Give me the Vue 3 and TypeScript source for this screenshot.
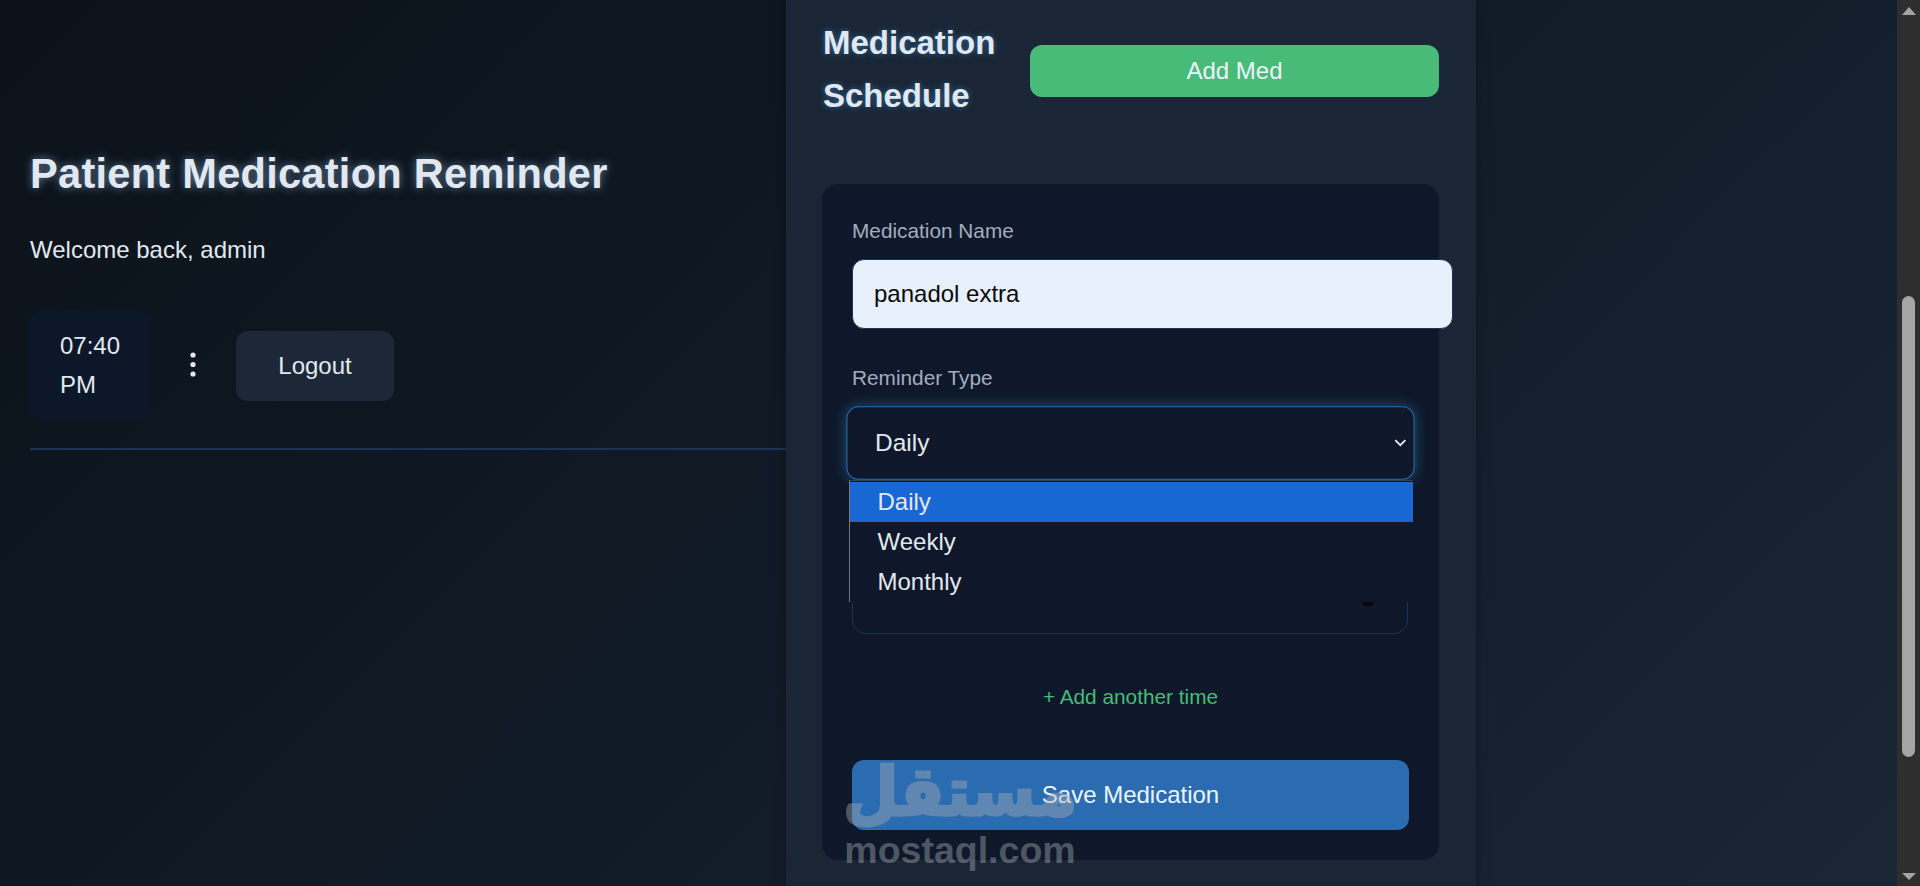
<script setup lang="ts">
import { ref } from "vue";

const medName = ref("panadol extra");
const reminderTypes = ["Daily", "Weekly", "Monthly"];
const reminderType = ref("Daily");
</script>

<template>
  <div class="page">
    <main class="layout">
      <!-- left column -->
      <section class="intro">
        <h1 class="title">Patient Medication Reminder</h1>
        <p class="welcome">Welcome back, admin</p>
        <div class="user-row">
          <div class="clock">07:40 PM</div>
          <button class="dots" type="button" aria-label="More">
            <svg width="6" height="25" viewBox="0 0 6 25">
              <circle cx="3" cy="3" r="2.6" />
              <circle cx="3" cy="12.5" r="2.6" />
              <circle cx="3" cy="22" r="2.6" />
            </svg>
          </button>
          <button class="logout" type="button">Logout</button>
        </div>
        <div class="divider"></div>
      </section>

      <!-- middle column -->
      <section class="schedule">
        <div class="schedule-head">
          <h2 class="schedule-title">Medication Schedule</h2>
          <button class="add-med" type="button">Add Med</button>
        </div>

        <form class="med-form" @submit.prevent>
          <div class="field">
            <label class="field-label">Medication Name</label>
            <input v-model="medName" class="text-input" type="text" />
          </div>

          <div class="field field-select">
            <label class="field-label">Reminder Type</label>
            <div class="select-wrap">
              <div class="select">
                <span>{{ reminderType }}</span>
                <svg class="chevron" width="12" height="8" viewBox="0 0 12 8">
                  <path d="M1 1.2 6 6.2 11 1.2" fill="none" stroke="#e2e8f0" stroke-width="1.8" />
                </svg>
              </div>
              <ul class="options">
                <li
                  v-for="opt in reminderTypes"
                  :key="opt"
                  class="option"
                  :class="{ selected: opt === reminderType }"
                >
                  {{ opt }}
                </li>
              </ul>
            </div>
          </div>

          <div class="time-input">
            <svg width="16" height="16" viewBox="0 0 16 16">
              <circle cx="8" cy="8" r="7.5" fill="#05080f" />
            </svg>
          </div>

          <a class="add-time">+ Add another time</a>
          <button class="save" type="submit">Save Medication</button>
        </form>

        <!-- site watermark on top of the shot -->
        <div class="watermark">
          <span class="wm-ar" dir="rtl">مستقل</span>
          <span class="wm-en">mostaql.com</span>
        </div>
      </section>

      <div class="right-fill"></div>
    </main>

    <!-- browser scrollbar -->
    <div class="scrollbar">
      <span class="arrow up"></span>
      <div class="track"><div class="thumb"></div></div>
      <span class="arrow down"></span>
    </div>
  </div>
</template>

<style>
html,
body {
  margin: 0;
  overflow: hidden;
  background: #0e1620;
}
</style>

<style scoped>
.page {
  display: flex;
  width: 1920px;
  height: 886px;
  overflow: hidden;
  font-family: "Liberation Sans", Arial, sans-serif;
  color: #e2e8f0;
}

.layout {
  flex: 1;
  display: grid;
  grid-template-columns: 786px 690px 1fr;
  background: linear-gradient(135deg, #0b1219 0%, #111b27 50%, #1a2636 100%);
}

.intro {
  padding: 149px 0 0 30px;
}

.title {
  margin: 0;
  font-size: 41.6px;
  line-height: 50px;
  font-weight: 700;
  color: #e2e8f0;
  letter-spacing: 0.25px;
  text-shadow: 0 0 10px rgba(150, 190, 235, 0.6);
}

.welcome {
  margin: 38px 0 0;
  font-size: 24px;
  line-height: 26px;
}

.user-row {
  display: flex;
  align-items: center;
  margin-top: 48px;
}

.clock {
  box-sizing: border-box;
  width: 120px;
  height: 107px;
  padding: 15px 30px;
  border-radius: 10px;
  background: #0d172a;
  font-size: 24px;
  line-height: 39px;
}

.dots {
  display: flex;
  padding: 0;
  margin: 0 40px 0 40px;
  border: 0;
  background: none;
}

.dots svg {
  fill: #e2e8f0;
}

.logout {
  width: 158px;
  height: 70px;
  margin-top: 2px;
  border: 0;
  border-radius: 12px;
  background: #1c2837;
  color: #e2e8f0;
  font: 24px "Liberation Sans", Arial, sans-serif;
}

.divider {
  height: 1.5px;
  margin-top: 30px;
  background: #1c3454;
}

.schedule {
  position: relative;
  box-sizing: border-box;
  padding: 17px 37px 0 36px;
  background: #1a2636;
  box-shadow: 0 0 12px rgba(0, 0, 0, 0.35);
}

.schedule-head {
  display: flex;
  align-items: flex-start;
  gap: 35px;
}

.schedule-title {
  flex: none;
  width: 172px;
  padding-left: 1px;
  margin: 0;
  font-size: 33px;
  line-height: 52.8px;
  font-weight: 700;
  color: #e2e8f0;
  text-shadow: 0 0 6px rgba(66, 153, 225, 0.55);
}

.add-med {
  flex: 1;
  height: 52px;
  margin-top: 28px;
  border: 0;
  border-radius: 12px;
  background: #48bb78;
  color: #ebf4ff;
  font: 24px "Liberation Sans", Arial, sans-serif;
}

.med-form {
  height: 676px;
  box-sizing: border-box;
  margin-top: 61px;
  padding: 36px 30px 30px 30px;
  border-radius: 16px;
  background: #0e182a;
}

.field {
  margin-bottom: 38px;
}

.field-label {
  display: block;
  margin-bottom: 18px;
  font-size: 20.8px;
  line-height: 22px;
  color: #a0aec0;
}

.text-input {
  display: block;
  box-sizing: content-box;
  width: 100%;
  height: 68px;
  margin-top: -1px;
  padding: 0 21px;
  border: 1px solid #1c3454;
  border-radius: 12px;
  outline: none;
  background: #e8f0fe;
  color: #0a0a0a;
  font: 24px "Liberation Sans", Arial, sans-serif;
}

.field-select {
  margin-bottom: 0;
}

.select-wrap {
  position: relative;
  z-index: 2;
}

.select {
  display: flex;
  align-items: center;
  justify-content: space-between;
  box-sizing: border-box;
  height: 71.5px;
  padding: 1px 7px 0 27px;
  border: 1px solid #2b6cb0;
  border-radius: 12px;
  background: #0e182a;
  font-size: 24px;
  transform: scale(1.02);
  box-shadow: 0 0 12px rgba(66, 153, 225, 0.4);
}

.options {
  position: absolute;
  left: -3.5px;
  top: 73px;
  width: 563px;
  margin: 0;
  padding: 1px 0 0;
  list-style: none;
  background: #0e182a;
  border-left: 1px solid #767676;
  border-top: 1px solid #3a3f47;
}

.option {
  height: 40px;
  padding-left: 28px;
  font-size: 24px;
  line-height: 40px;
}

.option.selected {
  background: #1967d2;
}

.time-input {
  display: flex;
  align-items: center;
  justify-content: flex-end;
  box-sizing: border-box;
  height: 70px;
  margin-top: 86px;
  margin-right: 1px;
  padding-right: 31px;
  border: 1px solid #1c3454;
  border-radius: 14px;
}

.add-time {
  display: block;
  margin-top: 52px;
  font-size: 20.8px;
  line-height: 22px;
  text-align: center;
  color: #48bb78;
}

.save {
  display: block;
  width: 100%;
  height: 70px;
  margin-top: 52px;
  border: 0;
  border-radius: 12px;
  background: #2b6cb0;
  color: #ebf4ff;
  font: 24px "Liberation Sans", Arial, sans-serif;
}

.watermark {
  position: absolute;
  left: 59px;
  top: 750px;
  z-index: 3;
  display: flex;
  flex-direction: column;
  align-items: center;
  width: 230px;
  pointer-events: none;
  color: #a8adb3;
  opacity: 0.42;
}

.wm-ar {
  font-family: "DejaVu Sans", sans-serif;
  font-size: 64px;
  font-weight: 700;
  line-height: 82px;
  -webkit-text-stroke: 3px #a8adb3;
  transform: scale(1, 1.05) translateY(3px);
  transform-origin: center bottom;
}

.wm-en {
  font-size: 37.5px;
  font-weight: 700;
  line-height: 36px;
}

.scrollbar {
  flex: none;
  display: flex;
  flex-direction: column;
  align-items: center;
  width: 23px;
  background: #2e2e2e;
}

.arrow {
  flex: none;
  width: 0;
  height: 0;
  border-left: 7.5px solid transparent;
  border-right: 7.5px solid transparent;
}

.arrow.up {
  margin-top: 7px;
  border-bottom: 8px solid #a5a5a5;
}

.arrow.down {
  margin-bottom: 6px;
  border-top: 7px solid #a5a5a5;
}

.track {
  flex: 1;
  width: 100%;
  padding-top: 281px;
  box-sizing: border-box;
}

.thumb {
  width: 13px;
  height: 461px;
  margin: 0 auto;
  border-radius: 7px;
  background: #a5a5a5;
}
</style>
